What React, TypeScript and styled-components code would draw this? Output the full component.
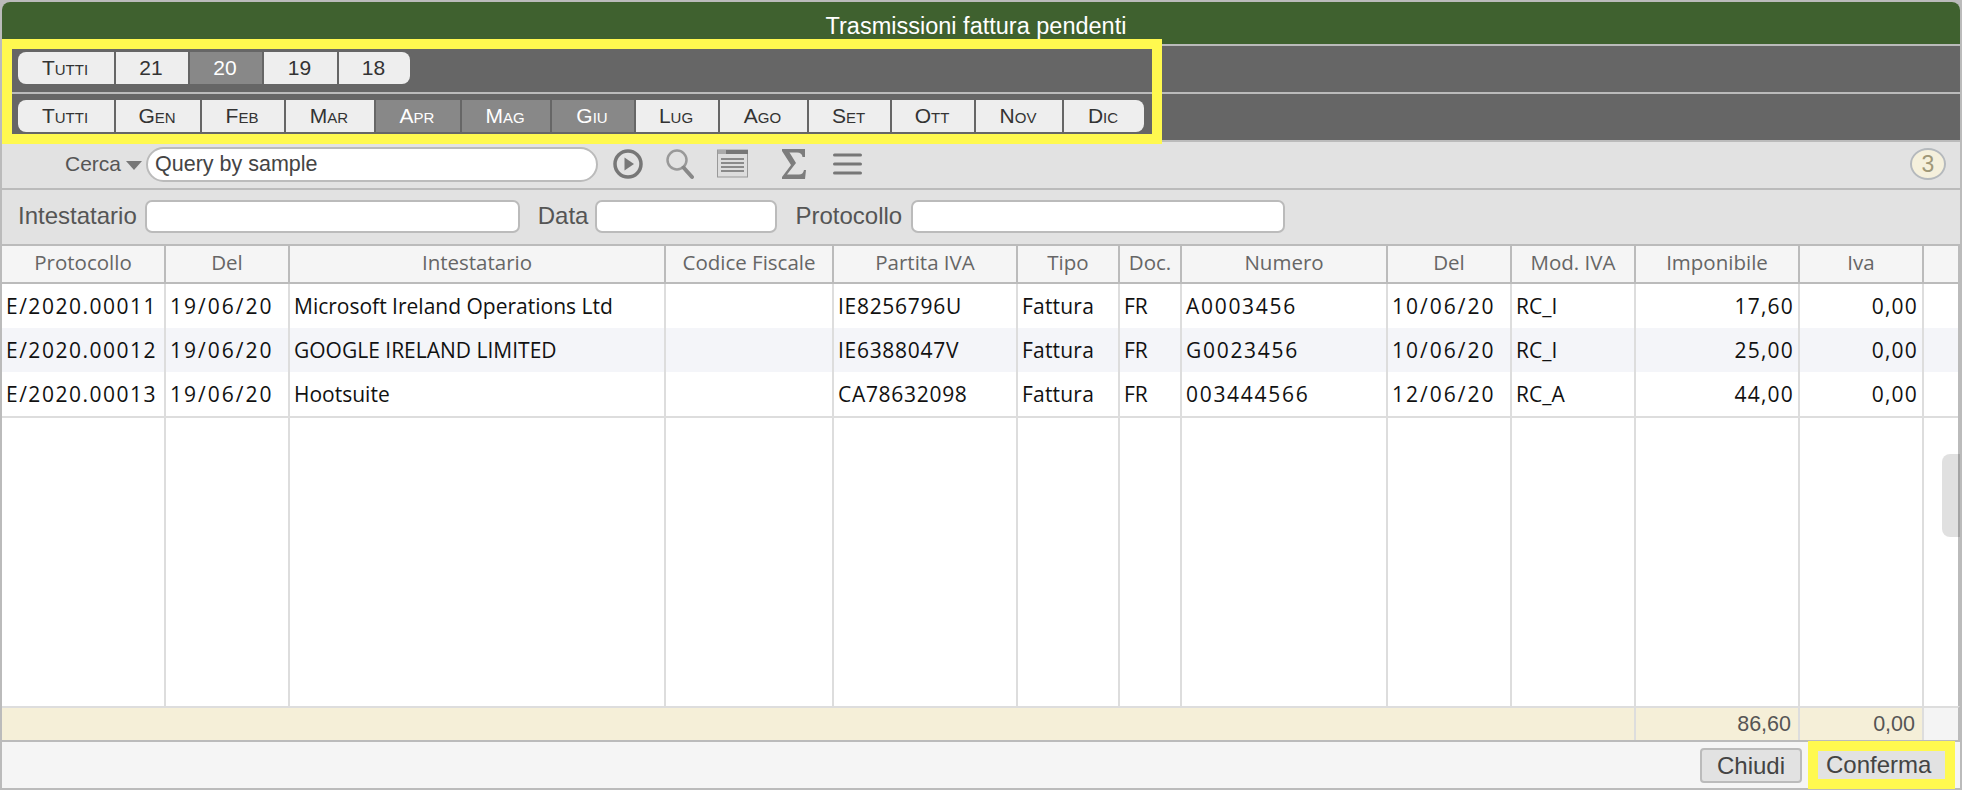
import React from "react";
import styled, { createGlobalStyle } from "styled-components";

const COLS = "164px 124px 376px 168px 184px 102px 62px 206px 124px 124px 164px 124px 34px";
const Sans = `"Liberation Sans", Arial, sans-serif`;
const Grid = `"Open Sans", "Noto Sans", sans-serif`;

const Global = createGlobalStyle`
  html, body { margin: 0; padding: 0; background: #bbbbbb; }
  #root { width: 1962px; height: 790px; }
  * { box-sizing: border-box; }
`;

const Win = styled.div`
  position: relative;
  width: 1962px;
  height: 790px;
  border: 2px solid #bbbbbb;
  border-radius: 10px 10px 0 0;
  background: #e2e2e2;
  display: flex;
  flex-direction: column;
  font-family: ${Sans};
`;

const Title = styled.div`
  height: 44px;
  flex: none;
  background: #3f612f;
  border-bottom: 2px solid #bbbbbb;
  border-radius: 8px 8px 0 0;
  color: #fff;
  font-size: 23.5px;
  line-height: 48px;
  text-align: center;
  padding-right: 10px;
`;

const TabBar = styled.div`
  height: 48px;
  flex: none;
  background: #666666;
  border-bottom: 2px solid #bbbbbb;
  padding: 6px 0 0 16px;
  display: flex;
  gap: 2px;
  align-items: flex-start;
`;

const Tab = styled.div<{ $w: number; $on?: boolean }>`
  width: ${(p) => p.$w}px;
  height: 32px;
  flex: none;
  background: ${(p) => (p.$on ? "#888888" : "#eeeeee")};
  color: ${(p) => (p.$on ? "#ffffff" : "#333333")};
  font-size: 21px;
  font-variant: small-caps;
  line-height: 31px;
  text-align: center;
  padding-right: 2px;
  &:first-child { border-radius: 8px 0 0 8px; }
  &:last-child { border-radius: 0 8px 8px 0; }
`;

const Highlight = styled.div`
  position: absolute;
  left: 0;
  top: 37px;
  width: 1160px;
  height: 105px;
  border: 10px solid #fff94f;
  pointer-events: none;
`;

const Toolbar = styled.div`
  height: 48px;
  flex: none;
  border-bottom: 2px solid #bbbbbb;
  display: flex;
  align-items: center;
  padding: 0 14px 2px 63px;
`;

const SearchLabel = styled.span`
  font-size: 21px;
  color: #555555;
  width: 61px;
`;

const Caret = styled.span`
  width: 0;
  height: 0;
  border-left: 8px solid transparent;
  border-right: 8px solid transparent;
  border-top: 9px solid #777777;
  margin: 3px 0 0 0;
  flex: none;
`;

const SearchInput = styled.div`
  width: 452px;
  height: 35px;
  margin-left: 4px;
  border: 2px solid #bbbbbb;
  border-radius: 18px;
  background: #fff;
  font-size: 21.5px;
  line-height: 30px;
  padding-left: 7px;
  color: #444444;
  flex: none;
`;

const Tool = styled.svg<{ $ml: number }>`
  flex: none;
  margin-left: ${(p) => p.$ml}px;
`;

const Badge = styled.div`
  margin-left: auto;
  width: 36px;
  height: 32px;
  border: 2px solid #b5b9bd;
  border-radius: 50%;
  background: #f5f0dc;
  color: #a09878;
  font-size: 23px;
  line-height: 28px;
  text-align: center;
`;

const Filters = styled.div`
  height: 56px;
  flex: none;
  border-bottom: 2px solid #bbbbbb;
  display: flex;
  align-items: center;
  padding: 0 0 2px 16px;
`;

const FilterLabel = styled.span<{ $ml?: number }>`
  font-size: 24px;
  color: #555555;
  margin-left: ${(p) => p.$ml ?? 0}px;
`;

const FilterInput = styled.div<{ $w: number; $ml: number }>`
  width: ${(p) => p.$w}px;
  height: 33px;
  margin-left: ${(p) => p.$ml}px;
  background: #fff;
  border: 2px solid #bbbbbb;
  border-radius: 7px;
  flex: none;
`;

const Head = styled.div`
  display: grid;
  grid-template-columns: ${COLS};
  height: 38px;
  flex: none;
  background: #f5f5f5;
  border-bottom: 2px solid #bbbbbb;
  border-right: 2px solid #bbbbbb;
`;

const HeadCell = styled.div`
  border-right: 2px solid #bbbbbb;
  font-family: ${Grid};
  font-size: 20.5px;
  color: #666666;
  text-align: center;
  line-height: 33px;
  white-space: nowrap;
  overflow: hidden;
  &:last-child { border-right: 0; }
`;

const Body = styled.div`
  position: relative;
  flex: 1;
  min-height: 0;
  display: flex;
  flex-direction: column;
  background: #fff;
  border-right: 2px solid #bbbbbb;
`;

const Row = styled.div<{ $alt?: boolean; $last?: boolean }>`
  display: grid;
  grid-template-columns: ${COLS};
  height: ${(p) => (p.$last ? 46 : 44)}px;
  flex: none;
  background: ${(p) => (p.$alt ? "#f4f5f9" : "#fff")};
  border-bottom: ${(p) => (p.$last ? "2px solid #dddddd" : "0")};
`;

const Cell = styled.div<{ $right?: boolean; $track?: number }>`
  border-right: 2px solid #dddddd;
  font-family: ${Grid};
  font-size: 21px;
  color: #111111;
  line-height: 45px;
  padding: 0 ${(p) => (p.$right ? 4 : 0)}px 0 ${(p) => (p.$right ? 0 : 4)}px;
  text-align: ${(p) => (p.$right ? "right" : "left")};
  letter-spacing: ${(p) => p.$track ?? 0}px;
  white-space: nowrap;
  overflow: hidden;
  &:last-child { border-right: 0; }
`;

const Filler = styled(Row)`
  flex: 1;
  height: auto;
`;

const Thumb = styled.div`
  position: absolute;
  right: -2px;
  top: 170px;
  width: 18px;
  height: 83px;
  background: rgba(0, 0, 0, 0.12);
  border-radius: 8px 0 0 8px;
`;

const Totals = styled.div`
  display: grid;
  grid-template-columns: 1634px 164px 124px 34px;
  height: 36px;
  flex: none;
  background: #f5efd8;
  border-top: 2px solid #dddddd;
  border-bottom: 2px solid #bbbbbb;
  border-right: 2px solid #bbbbbb;
`;

const TotalCell = styled.div<{ $blank?: boolean }>`
  border-right: 2px solid #dddddd;
  background: ${(p) => (p.$blank ? "#f4f4f4" : "transparent")};
  font-size: 21.5px;
  line-height: 32px;
  text-align: right;
  padding-right: 7px;
  color: #555555;
  &:last-child { border-right: 0; }
`;

const Footer = styled.div`
  height: 46px;
  flex: none;
  background: #f5f5f5;
  display: flex;
  align-items: center;
  justify-content: flex-end;
  gap: 16px;
  padding-right: 15px;
`;

const Chiudi = styled.div`
  width: 102px;
  height: 35px;
  background: #e2e2e2;
  border: 2px solid #bbbbbb;
  border-radius: 4px;
  font-size: 24px;
  line-height: 31px;
  text-align: center;
  color: #444444;
`;

const Conferma = styled.div`
  position: relative;
  width: 127px;
  height: 28px;
  background: #e2e2e2;
  box-shadow: 0 0 0 10px #fff94f;
  font-size: 24px;
  line-height: 28px;
  padding-left: 8px;
  color: #444444;
`;

const years = [
  ["Tutti", 96], ["21", 72], ["20", 72, true], ["19", 73], ["18", 71],
] as const;
const months = [
  ["Tutti", 96], ["Gen", 84], ["Feb", 82], ["Mar", 88], ["Apr", 84, true], ["Mag", 88, true],
  ["Giu", 82, true], ["Lug", 82], ["Ago", 87], ["Set", 81], ["Ott", 82], ["Nov", 86], ["Dic", 80],
] as const;
const heads = ["Protocollo", "Del", "Intestatario", "Codice Fiscale", "Partita IVA", "Tipo", "Doc.", "Numero", "Del", "Mod. IVA", "Imponibile", "Iva", ""];
const rows = [
  ["E/2020.00011", "19/06/20", "Microsoft Ireland Operations Ltd", "", "IE8256796U", "Fattura", "FR", "A0003456", "10/06/20", "RC_I", "17,60", "0,00"],
  ["E/2020.00012", "19/06/20", "GOOGLE IRELAND LIMITED", "", "IE6388047V", "Fattura", "FR", "G0023456", "10/06/20", "RC_I", "25,00", "0,00"],
  ["E/2020.00013", "19/06/20", "Hootsuite", "", "CA78632098", "Fattura", "FR", "003444566", "12/06/20", "RC_A", "44,00", "0,00"],
];
const tracking: Record<number, number> = { 0: 1.5, 1: 2, 4: 0.7, 5: 0.2, 7: 1.7, 8: 2, 10: 1.2, 11: 1.2 };

export default function App() {
  return (
    <>
      <Global />
      <Win>
        <Title>Trasmissioni fattura pendenti</Title>
        <TabBar>
          {years.map((y) => <Tab key={y[0]} $w={y[1]} $on={y[2]}>{y[0]}</Tab>)}
        </TabBar>
        <TabBar>
          {months.map((m) => <Tab key={m[0]} $w={m[1]} $on={m[2]}>{m[0]}</Tab>)}
        </TabBar>
        <Toolbar>
          <SearchLabel>Cerca</SearchLabel>
          <Caret />
          <SearchInput>Query by sample</SearchInput>
          <Tool $ml={15} width="30" height="32" viewBox="0 0 30 32" fill="none">
            <circle cx="15" cy="16" r="13" stroke="#777" strokeWidth="3.5" />
            <path d="M11.5 9.5 L21 16 L11.5 22.5 Z" fill="#777" />
          </Tool>
          <Tool $ml={23} width="28" height="32" viewBox="0 0 28 32" fill="none">
            <circle cx="11" cy="12" r="9.5" stroke="#999" strokeWidth="2.5" />
            <path d="M17.5 19.5 L26 29" stroke="#888" strokeWidth="4" strokeLinecap="round" />
          </Tool>
          <Tool $ml={23} width="31" height="30" viewBox="0 0 31 30" fill="none">
            <rect x="0.5" y="1" width="30" height="27" fill="#ddd" stroke="#999" />
            <rect x="9" y="1" width="22" height="4" fill="#777" />
            <rect x="1" y="1" width="8" height="4" fill="#aaa" />
            <path d="M4 10H27M4 14H27M4 18H27M4 22H27" stroke="#8a8a8a" strokeWidth="1.8" />
          </Tool>
          <Tool $ml={33} width="26" height="32" viewBox="0 0 26 32" fill="none">
            <path d="M1 1 H24 V9 H21.5 Q21 4.5 16 4.5 H8.5 L15 15 L6 26.5 H18 Q22 26.5 23 22 H25 L24 31 H1 V29 L10 17 L1 3 Z" fill="#7d7d7d" />
          </Tool>
          <Tool $ml={26} width="29" height="24" viewBox="0 0 29 24" fill="none">
            <path d="M1.5 3H27.5M1.5 12H27.5M1.5 21H27.5" stroke="#777" strokeWidth="3" strokeLinecap="round" />
          </Tool>
          <Badge>3</Badge>
        </Toolbar>
        <Filters>
          <FilterLabel>Intestatario</FilterLabel>
          <FilterInput $w={375} $ml={8} />
          <FilterLabel $ml={18}>Data</FilterLabel>
          <FilterInput $w={182} $ml={7} />
          <FilterLabel $ml={18}>Protocollo</FilterLabel>
          <FilterInput $w={374} $ml={9} />
        </Filters>
        <Head>
          {heads.map((h, i) => <HeadCell key={i}>{h}</HeadCell>)}
        </Head>
        <Body>
          {rows.map((r, i) => (
            <Row key={i} $alt={i === 1} $last={i === 2}>
              {r.map((c, j) => (
                <Cell key={j} $right={j >= 10} $track={tracking[j] ?? 0}>{c}</Cell>
              ))}
              <Cell />
            </Row>
          ))}
          <Filler>
            {heads.map((_, i) => <Cell key={i} />)}
          </Filler>
          <Thumb />
        </Body>
        <Totals>
          <TotalCell />
          <TotalCell>86,60</TotalCell>
          <TotalCell>0,00</TotalCell>
          <TotalCell $blank />
        </Totals>
        <Footer>
          <Chiudi>Chiudi</Chiudi>
          <Conferma>Conferma</Conferma>
        </Footer>
        <Highlight />
      </Win>
    </>
  );
}
